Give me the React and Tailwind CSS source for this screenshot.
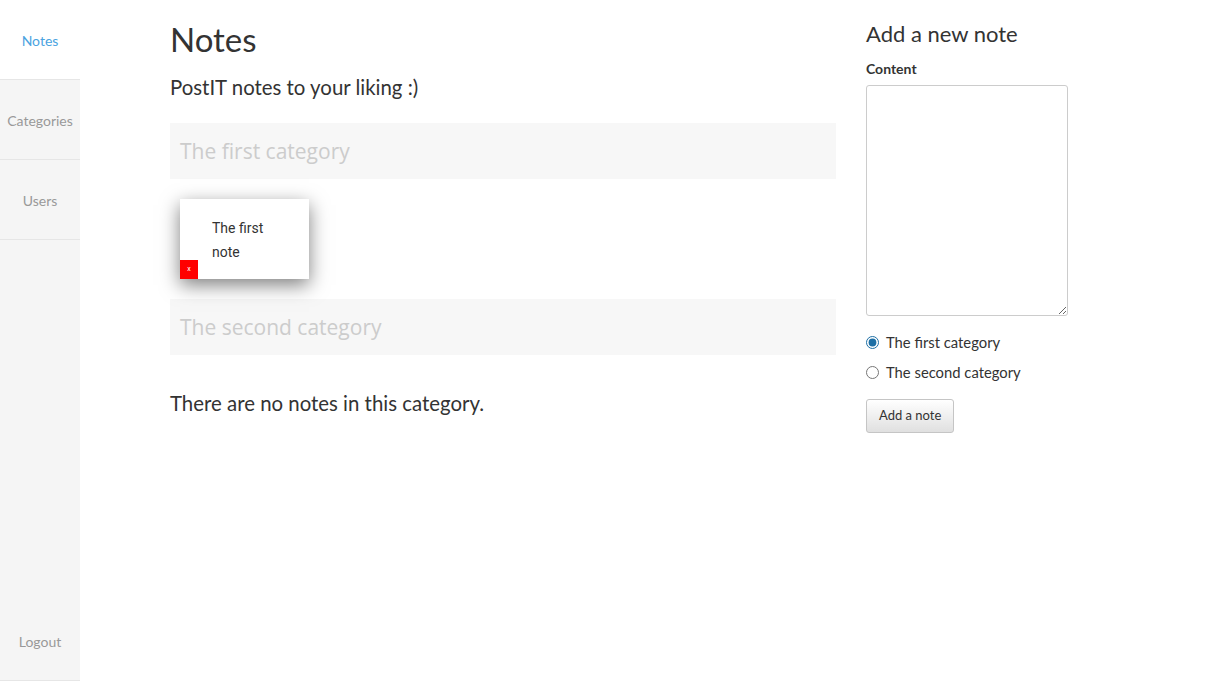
import React, { useState } from "react";

const categories = [
  { id: 1, name: "The first category", notes: [{ id: 1, text: "The first note" }] },
  { id: 2, name: "The second category", notes: [] },
];

function NavItem({ label, active }) {
  return (
    <a
      href="#"
      className={`flex h-20 items-center justify-center border-b border-[#e6e6e6] pt-[2px] text-[14px] ${
        active ? "bg-white text-[#4aa3df]" : "text-[#999]"
      }`}
    >
      {label}
    </a>
  );
}

function Note({ text }) {
  return (
    <div className="relative h-20 w-[129px] bg-white pl-8 pr-4 pt-[17px] text-[14px] leading-6 text-[#333] shadow-[0_6px_18px_rgba(0,0,0,0.5)] [font-family:Roboto,sans-serif]">
      {text}
      <button className="absolute bottom-0 left-0 flex h-[19px] w-[18px] items-center justify-center bg-[#ff0000] text-[7px] leading-none text-white">
        x
      </button>
    </div>
  );
}

export default function App() {
  const [selected, setSelected] = useState(1);
  const [content, setContent] = useState("");

  return (
    <div className="flex h-screen bg-white text-[#333] [font-family:Lato,'Open_Sans',sans-serif]">
      {/* sidebar */}
      <nav className="flex w-20 shrink-0 flex-col justify-between bg-[#f5f5f5]">
        <div>
          <NavItem label="Notes" active />
          <NavItem label="Categories" />
          <NavItem label="Users" />
        </div>
        <NavItem label="Logout" />
      </nav>

      {/* main */}
      <main className="ml-[90px] w-[666px] pt-[19px]">
        <h1 className="text-[33px] leading-10 text-[#333]">Notes</h1>
        <p className="mt-[14px] text-[20.4px] leading-7">PostIT notes to your liking :)</p>

        <div className="mt-[22px] space-y-5">
          {categories.map((cat) => (
            <section key={cat.id}>
              <h2 className="flex h-14 items-center bg-[#f7f7f7] px-[10px] pt-[2px] text-[21px] text-[#ccc] [font-family:'Open_Sans',sans-serif]">
                {cat.name}
              </h2>
              {cat.notes.length ? (
                <div className="flex gap-4 pl-[10px] pt-5">
                  {cat.notes.map((n) => (
                    <Note key={n.id} text={n.text} />
                  ))}
                </div>
              ) : (
                <p className="mt-[34px] text-[20.4px] leading-7">There are no notes in this category.</p>
              )}
            </section>
          ))}
        </div>
      </main>

      {/* form */}
      <aside className="ml-[30px] w-[220px] pt-[20px]">
        <h3 className="text-[22px] leading-7">Add a new note</h3>
        <label className="mt-[11px] block text-[14px] font-bold leading-5">Content</label>
        <textarea
          value={content}
          onChange={(e) => setContent(e.target.value)}
          className="mt-[6px] block h-[231px] w-[202px] rounded-[3px] border border-[#ccc] p-1"
        />
        <div className="mt-[16px] space-y-[10px] text-[14.8px]">
          {categories.map((cat) => (
            <label key={cat.id} className="flex h-5 items-center gap-[7px]">
              <input
                type="radio"
                name="category"
                checked={selected === cat.id}
                onChange={() => setSelected(cat.id)}
                className="m-0 h-[13px] w-[13px] accent-[#1d6fa5]"
              />
              {cat.name}
            </label>
          ))}
        </div>
        <button className="mt-[17px] h-[34px] rounded-[3px] border border-[#c5c5c5] bg-gradient-to-b from-white to-[#e0e0e0] px-3 text-[13px] text-[#333]">
          Add a note
        </button>
      </aside>
    </div>
  );
}
